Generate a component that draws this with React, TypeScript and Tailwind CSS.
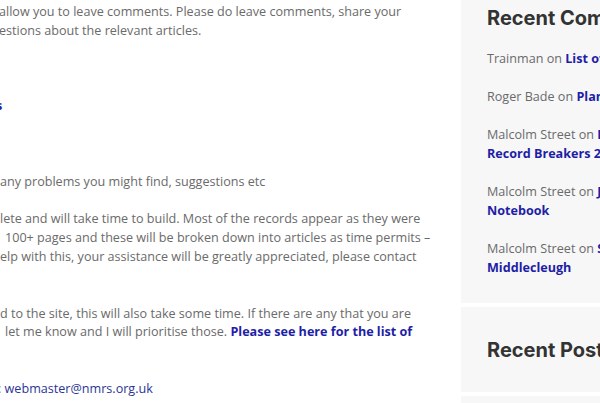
import React from 'react';

const body = { fontFamily: '"Open Sans", "Noto Sans", sans-serif' };
const head = { fontFamily: 'Inter, "Liberation Sans", sans-serif' };

const Line: React.FC<{ children?: React.ReactNode; className?: string }> = ({ children, className = '' }) => (
  <div className={`h-[18.85px] whitespace-nowrap ${className}`}>{children}</div>
);

const Comment: React.FC<{ author: string; lines: string[] }> = ({ author, lines }) => (
  <li className="mb-[19px] leading-[19px]">
    <div className="whitespace-nowrap">
      {author} on <a className="font-bold text-[#1e1ea6]">{lines[0]}</a>
    </div>
    {lines.slice(1).map((l) => (
      <div key={l} className="whitespace-nowrap font-bold text-[#1e1ea6]">
        {l}
      </div>
    ))}
  </li>
);

export default function App() {
  return (
    <div className="w-[600px] h-[403px] overflow-hidden flex bg-white" style={body}>
      <main className="w-[461px] shrink-0 overflow-hidden pt-[3px] text-[12.6px] leading-[18.85px] text-[#6a6a6a]">
        <Line className="-ml-[1px]">allow you to leave comments. Please do leave comments, share your</Line>
        <Line className="-ml-[1px]">estions about the relevant articles.</Line>
        <Line />
        <Line />
        <Line />
        <Line className="-ml-[4px]">
          <a className="text-[#1e1ea6] font-bold">s</a>
        </Line>
        <Line />
        <Line />
        <Line />
        <Line>any problems you might find, suggestions etc</Line>
        <Line />
        <Line>lete and will take time to build. Most of the records appear as they were</Line>
        <Line className="pl-[5px]">100+ pages and these will be broken down into articles as time permits –</Line>
        <Line>elp with this, your assistance will be greatly appreciated, please contact</Line>
        <Line />
        <Line />
        <Line>d to the site, this will also take some time. If there are any that you are</Line>
        <Line className="pl-[5px]">
          let me know and I will prioritise those.{' '}
          <a className="font-bold text-[#1e1ea6]">Please see here for the list of</a>
        </Line>
        <Line />
        <Line />
        <Line className="-ml-[2px]">
          : <a className="text-[#2b3596]">webmaster@nmrs.org.uk</a>
        </Line>
      </main>

      <aside className="flex-1 flex flex-col gap-[4px] overflow-hidden">
        <section className="h-[303px] shrink-0 bg-[#f7f7f8] pl-[26px] pt-[6px]">
          <h2 className="text-[20px] leading-[24px] font-bold text-[#333] whitespace-nowrap" style={head}>
            Recent Comments
          </h2>
          <ul className="mt-[19px] text-[12.6px] text-[#6a6a6a]">
            <Comment author="Trainman" lines={['List of Members']} />
            <Comment author="Roger Bade" lines={['Plans of Mines']} />
            <Comment author="Malcolm Street" lines={['Index to the', 'Record Breakers 2021']} />
            <Comment author="Malcolm Street" lines={['John Smith’s', 'Notebook']} />
            <Comment author="Malcolm Street" lines={['Silver Mines at', 'Middlecleugh']} />
          </ul>
        </section>
        <section className="h-[85px] shrink-0 bg-[#f7f7f8] pl-[26px] pt-[31px]">
          <h2 className="text-[20px] leading-[24px] font-bold text-[#333] whitespace-nowrap" style={head}>
            Recent Posts
          </h2>
        </section>
        <section className="h-[20px] shrink-0 bg-[#f7f7f8]" />
      </aside>
    </div>
  );
}
